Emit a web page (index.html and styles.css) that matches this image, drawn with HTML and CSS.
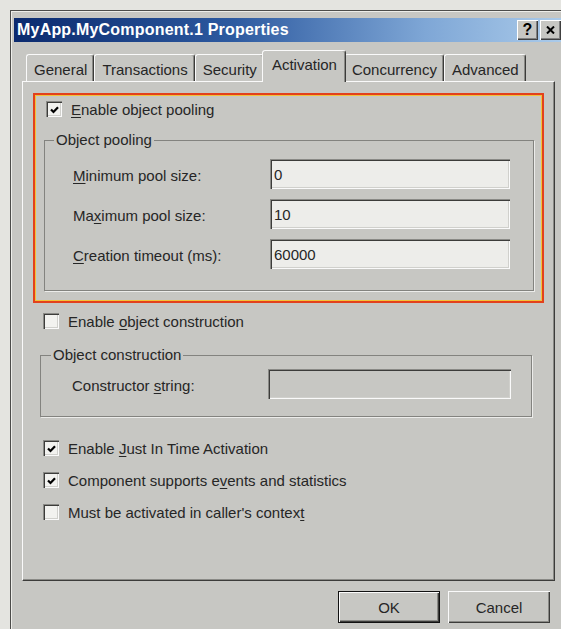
FILE: index.html
```html
<!DOCTYPE html>
<html lang="en">
<head>
<meta charset="utf-8">
<title>MyApp.MyComponent.1 Properties</title>
<link rel="stylesheet" href="styles.css">
</head>
<body>
<div class="dialog">
  <div class="titlebar">
    <span class="title">MyApp.MyComponent.1 Properties</span>
    <div class="caption-buttons">
      <span class="cap-btn help">?</span>
      <span class="cap-btn close">
        <svg width="9" height="8" viewBox="0 0 9 8"><path d="M1 0.5 L8 7.5 M8 0.5 L1 7.5" stroke="#000" stroke-width="2"/></svg>
      </span>
    </div>
  </div>

  <div class="sheet">
    <div class="tabs">
      <span class="tab">General</span>
      <span class="tab">Transactions</span>
      <span class="tab">Security</span>
      <span class="tab active">Activation</span>
      <span class="tab">Concurrency</span>
      <span class="tab">Advanced</span>
    </div>

    <div class="panel">
      <div class="highlight">
        <label class="check-row first">
          <span class="cb checked"><svg width="9" height="8" viewBox="0 0 9 8"><path d="M1 3.5 L3.5 6 L8 1.2" fill="none" stroke="#000" stroke-width="2.2"/></svg></span>
          <span><u>E</u>nable object pooling</span>
        </label>
        <fieldset class="group pooling">
          <legend>Object pooling</legend>
          <div class="form-grid">
            <span class="lbl"><u>M</u>inimum pool size:</span>
            <input class="field" type="text" value="0">
            <span class="lbl">Ma<u>x</u>imum pool size:</span>
            <input class="field" type="text" value="10">
            <span class="lbl"><u>C</u>reation timeout (ms):</span>
            <input class="field" type="text" value="60000">
          </div>
        </fieldset>
      </div>

      <label class="check-row construct">
        <span class="cb"></span>
        <span>Enable <u>o</u>bject construction</span>
      </label>

      <fieldset class="group construction">
        <legend>Object construction</legend>
        <div class="form-grid wide">
          <span class="lbl">Constructor <u>s</u>tring:</span>
          <input class="field" type="text" value="" disabled>
        </div>
      </fieldset>

      <div class="options">
        <label class="check-row">
          <span class="cb checked"><svg width="9" height="8" viewBox="0 0 9 8"><path d="M1 3.5 L3.5 6 L8 1.2" fill="none" stroke="#000" stroke-width="2.2"/></svg></span>
          <span>Enable <u>J</u>ust In Time Activation</span>
        </label>
        <label class="check-row">
          <span class="cb checked"><svg width="9" height="8" viewBox="0 0 9 8"><path d="M1 3.5 L3.5 6 L8 1.2" fill="none" stroke="#000" stroke-width="2.2"/></svg></span>
          <span>Component supports e<u>v</u>ents and statistics</span>
        </label>
        <label class="check-row">
          <span class="cb"></span>
          <span>Must be activated in caller's contex<u>t</u></span>
        </label>
      </div>
    </div>
  </div>

  <div class="actions">
    <button class="btn default">OK</button>
    <button class="btn">Cancel</button>
  </div>
</div>
</body>
</html>
```

FILE: styles.css
```css
html, body {
  margin: 0;
  padding: 0;
}

body {
  background: #e4e4e0;
  font-family: "Liberation Sans", Arial, sans-serif;
  font-size: 15px;
  color: #262626;
  height: 629px;
  overflow: hidden;
}

.dialog {
  margin: 10px 0 0 10px;
  width: 557px;
  box-sizing: border-box;
  border: 1px solid #4c4c4a;
  background: #c7c7c3;
  padding: 7px 3px 20px;
  box-shadow: inset 1px 1px 0 #eeeeea, inset -1px -1px 0 #8a8a86;
}

/* caption */
.titlebar {
  height: 24px;
  display: flex;
  align-items: center;
  padding: 0 2px 0 3px;
  background: linear-gradient(90deg, #0b2a6e 0%, #2d5aa0 40%, #7fa7d6 75%, #abcbea 100%);
}

.title {
  color: #fff;
  font-weight: bold;
  font-size: 16px;
  letter-spacing: 0.2px;
}

.caption-buttons {
  margin-left: auto;
  display: flex;
  gap: 2px;
}

.cap-btn {
  width: 21px;
  height: 20px;
  display: flex;
  align-items: center;
  justify-content: center;
  background: #c7c7c3;
  box-shadow: inset 1px 1px 0 #fff, inset -1px -1px 0 #404040, inset -2px -2px 0 #808080;
  font-weight: bold;
  font-size: 16px;
  color: #000;
}

/* property sheet */
.sheet {
  padding: 0 8px;
}

.tabs {
  display: flex;
  align-items: flex-end;
  height: 31px;
  margin-top: 8px;
  padding-left: 4px;
}

.tab {
  height: 27px;
  box-sizing: border-box;
  padding: 5px 6px 0 7px;
  border: 1px solid;
  border-bottom: none;
  border-color: #fafafa #3c3c3a transparent #fafafa;
  border-radius: 3px 3px 0 0;
  box-shadow: inset -1px 0 0 #8a8a86;
  line-height: 20px;
  white-space: nowrap;
}

.tab.active {
  position: relative;
  z-index: 1;
  height: 32px;
  margin: 0 -2px -1px;
  padding: 4px 8px 0 9px;
  background: #c7c7c3;
}

.panel {
  height: 500px;
  box-sizing: border-box;
  border: 1px solid;
  border-color: #fafafa #3c3c3a #3c3c3a #fafafa;
  box-shadow: inset -1px -1px 0 #8a8a86;
  padding: 11px 10px 0;
}

/* emphasised region */
.highlight {
  border: 2px solid #e3411c;
  box-shadow: inset 0 0 0 1px #f3c23a;
  padding: 4px 8px 10px 9px;
}

.check-row {
  display: flex;
  align-items: center;
  gap: 9px;
  height: 20px;
}

.check-row.first {
  margin-left: 2px;
}

.cb {
  width: 16px;
  height: 16px;
  flex: none;
  display: flex;
  align-items: center;
  justify-content: center;
  background: #f2f2ef;
  box-shadow: inset 1px 1px 0 #8a8a86, inset 2px 2px 0 #3c3c3a, inset -1px -1px 0 #fafafa, inset -2px -2px 0 #d0d0cc;
}

.cb svg {
  margin: 1px 0 0 1px;
}

u {
  text-decoration-thickness: 1px;
  text-underline-offset: 2px;
}

/* group boxes */
.group {
  margin: 12px 0 0;
  padding: 10px 0 21px;
  border: 1px solid #83837f;
  box-shadow: 1px 1px 0 #ececea;
  min-width: 0;
}

.group legend {
  margin-left: 9px;
  padding: 0 2px;
  line-height: 18px;
}

.form-grid {
  display: grid;
  grid-template-columns: 197px 240px;
  row-gap: 10px;
  align-items: center;
  padding-left: 28px;
}

.lbl {
  padding-top: 3px;
}

.field {
  height: 30px;
  box-sizing: border-box;
  border: none;
  margin: 0;
  padding: 0 4px;
  background: #ededea;
  font: inherit;
  color: #262626;
  box-shadow: inset 1px 1px 0 #8a8a86, inset 2px 2px 0 #3c3c3a, inset -1px -1px 0 #fafafa, inset -2px -2px 0 #d0d0cc;
  outline: none;
}

.field:disabled {
  background: #c7c7c3;
}

.check-row.construct {
  margin: 8px 0 0 10px;
}

.group.construction {
  margin: 15px 12px 0 7px;
  padding: 5px 0 17px;
}

.group.construction legend {
  margin-left: 10px;
}

.form-grid.wide {
  grid-template-columns: 196px 243px;
  padding-left: 31px;
}

.options {
  display: flex;
  flex-direction: column;
  gap: 12px;
  margin: 21px 0 0 10px;
}

/* dialog buttons */
.actions {
  display: flex;
  justify-content: flex-end;
  gap: 8px;
  margin-top: 10px;
  padding-right: 13px;
}

.btn {
  width: 102px;
  height: 32px;
  border: none;
  margin: 0;
  background: #c7c7c3;
  font: inherit;
  color: #262626;
  box-shadow: inset 1px 1px 0 #fafafa, inset -1px -1px 0 #3c3c3a, inset -2px -2px 0 #8a8a86;
}

.btn.default {
  border: 1px solid #111;
}
```
